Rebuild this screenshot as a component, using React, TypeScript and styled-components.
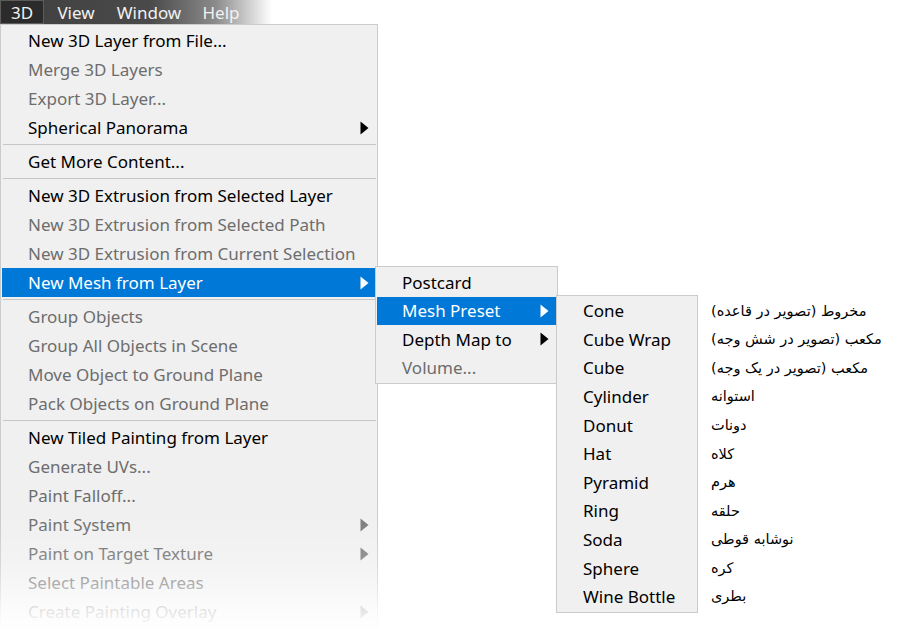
import React from "react";
import styled, { createGlobalStyle } from "styled-components";

const GlobalStyle = createGlobalStyle`
  html, body { margin: 0; padding: 0; background: #ffffff; }
  body { font-family: "Noto Sans", "Open Sans", sans-serif; }
`;

const Screen = styled.div`
  position: relative;
  width: 900px;
  height: 629px;
  overflow: hidden;
  background: #ffffff;
`;

const MenuBar = styled.div`
  display: flex;
  align-items: stretch;
  height: 24px;
  background: linear-gradient(to right, #3f3f3f 0px, #4a4a4a 150px, #8a8a8a 215px, #ffffff 272px);
  font-size: 17px;
  color: #f2f2f2;
`;

const BarItem = styled.div<{ $active?: boolean; $w: number }>`
  box-sizing: border-box;
  width: ${(p) => p.$w}px;
  display: flex;
  align-items: center;
  justify-content: center;
  background: ${(p) => (p.$active ? "#2b2b2b" : "transparent")};
  border: 1px solid ${(p) => (p.$active ? "#5c5c5c" : "transparent")};
  line-height: 1;
`;

const Menu = styled.div<{ $w: number }>`
  position: relative;
  box-sizing: border-box;
  width: ${(p) => p.$w}px;
  background: #f0f0f0;
  border: 1px solid #cbcbcb;
  padding: 1px;
  font-size: 17px;
  line-height: 1;
`;

const Item = styled.div<{ $disabled?: boolean; $active?: boolean; $h?: number; $pl: number }>`
  position: relative;
  display: flex;
  align-items: center;
  height: ${(p) => p.$h ?? 29}px;
  padding-left: ${(p) => p.$pl}px;
  padding-right: 7px;
  background: ${(p) => (p.$active ? "#0078d7" : "transparent")};
  color: ${(p) => (p.$active ? "#ffffff" : p.$disabled ? "#6d6d6d" : "#000000")};
  white-space: nowrap;
`;

const Label = styled.span`
  flex: 1;
`;

const Separator = styled.div`
  height: 1px;
  margin: 2px 0 2px 1px;
  background: #c6c6c6;
`;

const Sub = styled.div<{ $left: number; $top: number }>`
  position: absolute;
  left: ${(p) => p.$left}px;
  top: ${(p) => p.$top}px;
  z-index: 2;
  display: flex;
  align-items: flex-start;
`;

const Translations = styled.div`
  display: flex;
  flex-direction: column;
  padding-top: 2px;
  margin-left: 13px;
  font-family: "DejaVu Sans", sans-serif;
  font-size: 14.5px;
  color: #000000;
`;

const Translation = styled.div`
  height: 28.6px;
  display: flex;
  align-items: center;
  white-space: nowrap;
`;

const Fade = styled.div`
  position: absolute;
  left: 0;
  top: 500px;
  width: 392px;
  height: 129px;
  z-index: 3;
  pointer-events: none;
  background: linear-gradient(
    to bottom,
    rgba(255, 255, 255, 0) 0px,
    rgba(255, 255, 255, 0.06) 30px,
    rgba(255, 255, 255, 0.2) 60px,
    rgba(255, 255, 255, 0.45) 85px,
    rgba(255, 255, 255, 0.8) 110px,
    rgba(255, 255, 255, 0.97) 129px
  );
`;

const Arrow = ({ color }: { color: string }) => (
  <svg width="9" height="14" viewBox="0 0 9 14" style={{ display: "block" }}>
    <polygon points="0.5,0.5 8.5,7 0.5,13.5" fill={color} />
  </svg>
);

const shapes: [string, string][] = [
  ["Cone", "مخروط (تصویر در قاعده)"],
  ["Cube Wrap", "مکعب (تصویر در شش وجه)"],
  ["Cube", "مکعب (تصویر در یک وجه)"],
  ["Cylinder", "استوانه"],
  ["Donut", "دونات"],
  ["Hat", "کلاه"],
  ["Pyramid", "هرم"],
  ["Ring", "حلقه"],
  ["Soda", "نوشابه قوطی"],
  ["Sphere", "کره"],
  ["Wine Bottle", "بطری"],
];

const MeshPresetMenu = () => (
  <Sub $left={179} $top={-2}>
    <Menu $w={142}>
      {shapes.map(([en]) => (
        <Item key={en} $pl={25} $h={28.6}>
          <Label>{en}</Label>
        </Item>
      ))}
    </Menu>
    <Translations>
      {shapes.map(([en, fa]) => (
        <Translation key={en}>
          <span dir="rtl">{fa}</span>
        </Translation>
      ))}
    </Translations>
  </Sub>
);

const MeshMenu = () => (
  <Sub $left={373} $top={-2}>
    <Menu $w={183}>
      <Item $pl={25} $h={28.5}>
        <Label>Postcard</Label>
      </Item>
      <Item $pl={25} $h={28.5} $active>
        <Label>Mesh Preset</Label>
        <Arrow color="#ffffff" />
        <MeshPresetMenu />
      </Item>
      <Item $pl={25} $h={28.5}>
        <Label>Depth Map to</Label>
        <Arrow color="#000000" />
      </Item>
      <Item $pl={25} $h={28.5} $disabled>
        <Label>Volume...</Label>
      </Item>
    </Menu>
  </Sub>
);

type Entry =
  | { sep: true }
  | { label: string; disabled?: boolean; arrow?: boolean; active?: boolean; sub?: boolean };

const entries: Entry[] = [
  { label: "New 3D Layer from File..." },
  { label: "Merge 3D Layers", disabled: true },
  { label: "Export 3D Layer...", disabled: true },
  { label: "Spherical Panorama", arrow: true },
  { sep: true },
  { label: "Get More Content..." },
  { sep: true },
  { label: "New 3D Extrusion from Selected Layer" },
  { label: "New 3D Extrusion from Selected Path", disabled: true },
  { label: "New 3D Extrusion from Current Selection", disabled: true },
  { label: "New Mesh from Layer", arrow: true, active: true, sub: true },
  { sep: true },
  { label: "Group Objects", disabled: true },
  { label: "Group All Objects in Scene", disabled: true },
  { label: "Move Object to Ground Plane", disabled: true },
  { label: "Pack Objects on Ground Plane", disabled: true },
  { sep: true },
  { label: "New Tiled Painting from Layer" },
  { label: "Generate UVs...", disabled: true },
  { label: "Paint Falloff...", disabled: true },
  { label: "Paint System", disabled: true, arrow: true },
  { label: "Paint on Target Texture", disabled: true, arrow: true },
  { label: "Select Paintable Areas", disabled: true },
  { label: "Create Painting Overlay", disabled: true, arrow: true },
];

export default function App() {
  return (
    <Screen>
      <GlobalStyle />
      <MenuBar>
        <BarItem $active $w={44}>3D</BarItem>
        <BarItem $w={64}>View</BarItem>
        <BarItem $w={82}>Window</BarItem>
        <BarItem $w={62}>Help</BarItem>
      </MenuBar>
      <Menu $w={378}>
        {entries.map((e, i) =>
          "sep" in e ? (
            <Separator key={i} />
          ) : (
            <Item key={i} $pl={26} $disabled={e.disabled} $active={e.active}>
              <Label>{e.label}</Label>
              {e.arrow && (
                <Arrow color={e.active ? "#ffffff" : e.disabled ? "#7a7a7a" : "#000000"} />
              )}
              {e.sub && <MeshMenu />}
            </Item>
          )
        )}
      </Menu>
      <Fade />
    </Screen>
  );
}
